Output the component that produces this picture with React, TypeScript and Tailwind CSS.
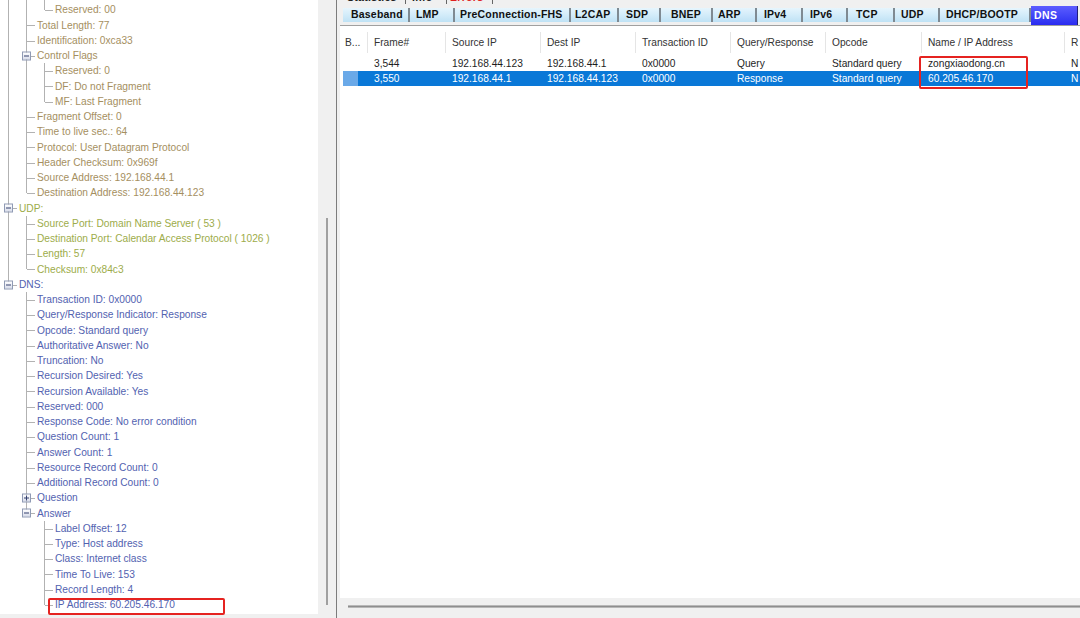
import React from "react";

/* ---------------- Data ---------------- */

type TreeItem = {
  g: string; // guide columns: "|" line, "T" tee, "L" last, " " none
  t: string;
  e?: "+" | "-";
  c: string;
};

const IP = "text-[#a58f5f]";
const UDP = "text-[#9dac4a]";
const DNS = "text-[#5262b0]";

const tree: TreeItem[] = [
  { g: "||T", t: "Delay: Normal", c: IP },
  { g: "||L", t: "Reserved: 00", c: IP },
  { g: "|T", t: "Total Length: 77", c: IP },
  { g: "|T", t: "Identification: 0xca33", c: IP },
  { g: "|T", t: "Control Flags", e: "-", c: IP },
  { g: "||T", t: "Reserved: 0", c: IP },
  { g: "||T", t: "DF: Do not Fragment", c: IP },
  { g: "||L", t: "MF: Last Fragment", c: IP },
  { g: "|T", t: "Fragment Offset: 0", c: IP },
  { g: "|T", t: "Time to live sec.: 64", c: IP },
  { g: "|T", t: "Protocol: User Datagram Protocol", c: IP },
  { g: "|T", t: "Header Checksum: 0x969f", c: IP },
  { g: "|T", t: "Source Address: 192.168.44.1", c: IP },
  { g: "|L", t: "Destination Address: 192.168.44.123", c: IP },
  { g: "T", t: "UDP:", e: "-", c: UDP },
  { g: "|T", t: "Source Port: Domain Name Server ( 53 )", c: UDP },
  { g: "|T", t: "Destination Port: Calendar Access Protocol ( 1026 )", c: UDP },
  { g: "|T", t: "Length: 57", c: UDP },
  { g: "|L", t: "Checksum: 0x84c3", c: UDP },
  { g: "L", t: "DNS:", e: "-", c: DNS },
  { g: " T", t: "Transaction ID: 0x0000", c: DNS },
  { g: " T", t: "Query/Response Indicator: Response", c: DNS },
  { g: " T", t: "Opcode: Standard query", c: DNS },
  { g: " T", t: "Authoritative Answer: No", c: DNS },
  { g: " T", t: "Truncation: No", c: DNS },
  { g: " T", t: "Recursion Desired: Yes", c: DNS },
  { g: " T", t: "Recursion Available: Yes", c: DNS },
  { g: " T", t: "Reserved: 000", c: DNS },
  { g: " T", t: "Response Code: No error condition", c: DNS },
  { g: " T", t: "Question Count: 1", c: DNS },
  { g: " T", t: "Answer Count: 1", c: DNS },
  { g: " T", t: "Resource Record Count: 0", c: DNS },
  { g: " T", t: "Additional Record Count: 0", c: DNS },
  { g: " T", t: "Question", e: "+", c: DNS },
  { g: " L", t: "Answer", e: "-", c: DNS },
  { g: "  T", t: "Label Offset: 12", c: DNS },
  { g: "  T", t: "Type: Host address", c: DNS },
  { g: "  T", t: "Class: Internet class", c: DNS },
  { g: "  T", t: "Time To Live: 153", c: DNS },
  { g: "  T", t: "Record Length: 4", c: DNS },
  { g: "  L", t: "IP Address: 60.205.46.170", c: DNS },
];

const tabs = [
  { name: "Baseband", w: "w-[67px] pl-[8px]" },
  { name: "LMP", w: "w-[45px] pl-[6px]" },
  { name: "PreConnection-FHS", w: "w-[116px] pl-[5px]" },
  { name: "L2CAP", w: "w-[48px] pl-[4px]" },
  { name: "SDP", w: "w-[42px] pl-[7px]" },
  { name: "BNEP", w: "w-[52px] pl-[10px]" },
  { name: "ARP", w: "w-[44px] pl-[5px]" },
  { name: "IPv4", w: "w-[46px] pl-[7px]" },
  { name: "IPv6", w: "w-[45px] pl-[7px]" },
  { name: "TCP", w: "w-[47px] pl-[8px]" },
  { name: "UDP", w: "w-[45px] pl-[6px]" },
  { name: "DHCP/BOOTP", w: "w-[91px] pl-[6px]" },
];

const cols = [
  { label: "B...", w: "w-[27px]", pad: "pl-[4px]" },
  { label: "Frame#", w: "w-[78px]", pad: "pl-[6px]" },
  { label: "Source IP", w: "w-[95px]", pad: "pl-[6px]" },
  { label: "Dest IP", w: "w-[95px]", pad: "pl-[6px]" },
  { label: "Transaction ID", w: "w-[95px]", pad: "pl-[6px]" },
  { label: "Query/Response", w: "w-[95px]", pad: "pl-[6px]" },
  { label: "Opcode", w: "w-[96px]", pad: "pl-[6px]" },
  { label: "Name / IP Address", w: "w-[143px]", pad: "pl-[6px]" },
  { label: "R", w: "w-[40px]", pad: "pl-[6px]" },
];

const frames = [
  ["", "3,544", "192.168.44.123", "192.168.44.1", "0x0000", "Query", "Standard query", "zongxiaodong.cn", "N"],
  ["", "3,550", "192.168.44.1", "192.168.44.123", "0x0000", "Response", "Standard query", "60.205.46.170", "N"],
];

/* ---------------- Tree ---------------- */

const Expander = ({ kind }: { kind: "+" | "-" }) => (
  <div className="absolute left-[4px] top-1/2 flex h-[9px] w-[9px] -translate-y-1/2 items-center justify-center border border-[#8f9ab4] bg-gradient-to-b from-white to-[#d8dcea]">
    <div className="relative h-px w-[5px] bg-[#34406e]">
      {kind === "+" && <div className="absolute left-[2px] top-[-2px] h-[5px] w-px bg-[#34406e]" />}
    </div>
  </div>
);

const TreeRow = ({ item }: { item: TreeItem }) => {
  const guides = item.g.split("");
  return (
    <div className="flex h-[15.26px] items-center whitespace-nowrap">
      {guides.map((c, i) => {
        const own = i === guides.length - 1;
        return (
          <div key={i} className="relative h-full w-[18px] shrink-0">
            {(c === "|" || c === "T") && (
              <div className="absolute left-[8px] top-0 h-full w-px bg-[#b2b2b2]" />
            )}
            {c === "L" && <div className="absolute left-[8px] top-0 h-1/2 w-px bg-[#b2b2b2]" />}
            {(c === "T" || c === "L") && (
              <div className="absolute left-[9px] top-1/2 h-px w-[8px] bg-[#b2b2b2]" />
            )}
            {own && item.e && <Expander kind={item.e} />}
          </div>
        );
      })}
      <span className={`ml-px ${item.c}`}>{item.t}</span>
    </div>
  );
};

/* ---------------- App ---------------- */

export default function App() {
  return (
    <div className="relative flex h-[618px] w-[1080px] overflow-hidden bg-[#f0f0f0] font-['Liberation_Sans',Arial,sans-serif] text-[10.2px]">
      {/* Left: packet tree */}
      <div className="flex h-full w-[336px] shrink-0">
        <div className="h-[614px] w-[318px] overflow-hidden bg-white">
          <div className="mt-[-12.89px]">
            {tree.map((item, i) => (
              <TreeRow key={i} item={item} />
            ))}
          </div>
        </div>
        <div className="w-[18px]">
          <div className="ml-[8px] mt-[218px] h-[387px] w-[2px] bg-[#a0a0a0]" />
        </div>
      </div>

      {/* Splitter */}
      <div className="h-full w-[4px] shrink-0 border-l border-[#7c7c7c] bg-[#f0f0f0]" />

      {/* Right: decoder tabs + list */}
      <div className="flex h-full flex-1 flex-col">
        {/* cut-off upper tab row */}
        <div className="h-[6px] overflow-hidden">
          <div className="mt-[-10px] flex h-[14px] items-center pl-[7px] text-[10.5px] font-bold leading-[14px] tracking-[0.3px]">
            <span className="w-[58px] text-[#222]">Statistics</span>
            <span className="mr-[6px] h-full w-px bg-[#666]" />
            <span className="w-[34px] text-[#222]">Info</span>
            <span className="mr-[3px] h-full w-px bg-[#666]" />
            <span className="w-[42px] text-[#e02020]">Errors</span>
            <span className="h-full w-px bg-[#666]" />
          </div>
        </div>

        <div className="flex h-[19px] items-start pl-[3px]">
          {tabs.map((tab) => (
            <div
              key={tab.name}
              className={`${tab.w} mt-[2px] flex h-[14px] shrink-0 items-center overflow-hidden whitespace-nowrap border-r-2 border-[#7f8a92] bg-gradient-to-b from-[#e6f5fd] to-[#bfe2f5] text-[10.5px] font-bold tracking-[0.2px] text-[#111]`}
            >
              {tab.name}
            </div>
          ))}
          <div className="flex h-[19px] w-[47px] shrink-0 items-center border-r border-[#20207a] bg-gradient-to-b from-[#5c5cff] to-[#2a2af0] pl-[3px] text-[10.5px] font-bold tracking-[0.4px] text-white">
            DNS
          </div>
        </div>

        <div className="h-px bg-[#a0a0a0]" />

        {/* list */}
        <div className="flex-1 bg-white pl-px pt-[6px]">
          <div className="flex h-[21px]">
            {cols.map((col) => (
              <div
                key={col.label}
                className={`${col.w} ${col.pad} flex shrink-0 items-center border-r border-[#e5e5e5] text-[#333]`}
              >
                {col.label}
              </div>
            ))}
          </div>

          <div className="mt-[3px]">
            {frames.map((row, r) => {
              const selected = r === 1;
              return (
                <div
                  key={r}
                  className={`flex h-[15px] items-center ${selected ? "ml-[2px] bg-[#0a78d7] text-white" : "text-[#1e1e1e]"}`}
                >
                  {row.map((cell, i) => (
                    <div
                      key={i}
                      className={`${i === 0 && selected ? "w-[25px]" : cols[i].w} ${cols[i].pad} flex h-full shrink-0 items-center whitespace-nowrap`}
                    >
                      {i === 0 && selected ? (
                        <div className="-ml-[4px] h-full w-[15px] bg-[#6aa9e8]" />
                      ) : (
                        cell
                      )}
                    </div>
                  ))}
                </div>
              );
            })}
          </div>
        </div>

        {/* horizontal scroll strip */}
        <div className="h-[20px] shrink-0 bg-[#f0f0f0] pl-[8px] pt-[7px]">
          <div className="h-[3px] border-y border-[#b8b8b8] bg-[#8e8e8e]" />
        </div>
      </div>

      {/* annotation boxes */}
      <div className="absolute left-[919px] top-[56px] h-[33px] w-[109px] rounded-[2px] border-2 border-[#e52320]" />
      <div className="absolute left-[48px] top-[598px] h-[17px] w-[177px] rounded-[2px] border-2 border-[#e52320]" />
    </div>
  );
}
